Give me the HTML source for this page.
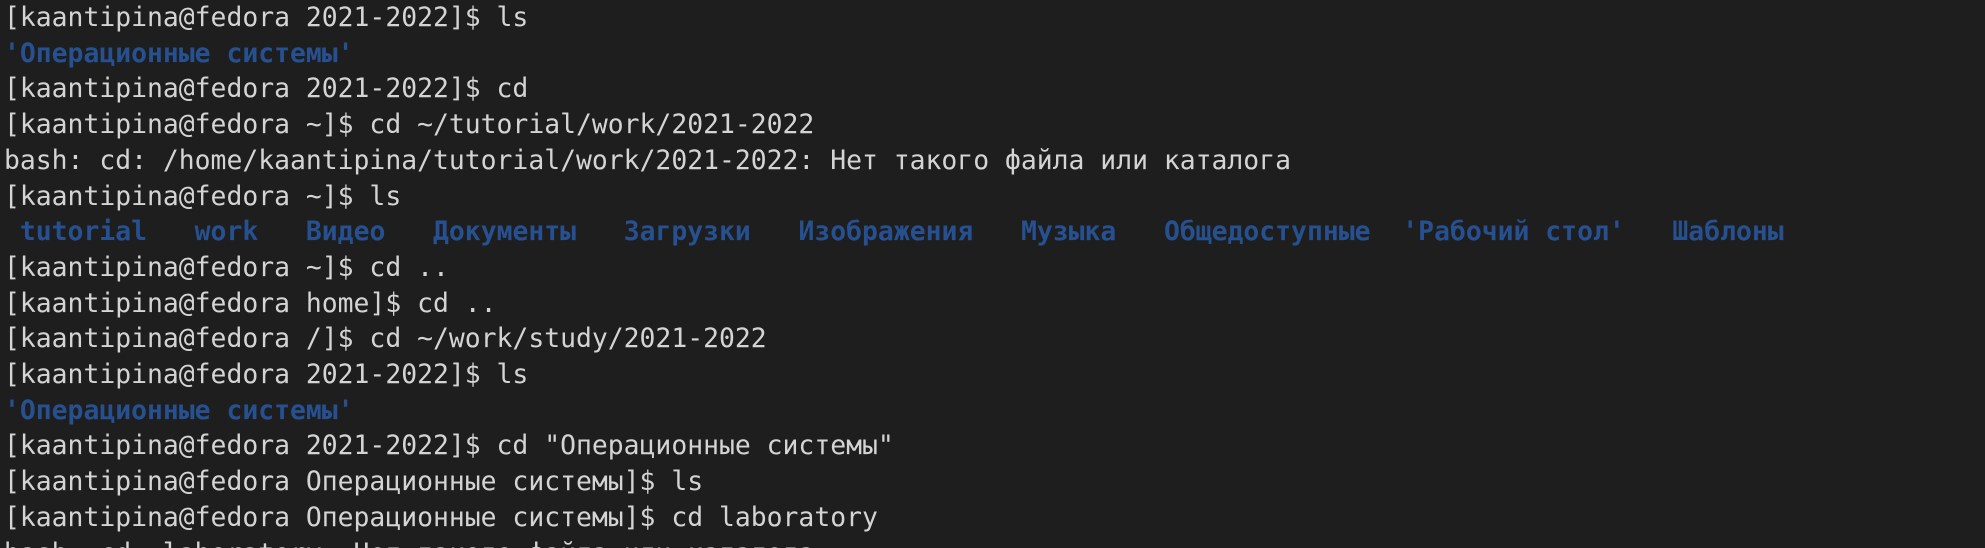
<!DOCTYPE html>
<html><head><meta charset="utf-8"><style>
html,body{margin:0;padding:0;background:#1e1e1e;width:1985px;height:548px;overflow:hidden}
pre{margin:0;padding:0 0 0 4px;font-family:"DejaVu Sans Mono","Liberation Mono",monospace;font-size:26.4px;line-height:35.7px;color:#d4d4d4;position:relative;top:0px;white-space:pre}
b{color:#26508f;font-weight:bold}
</style></head><body><pre>[kaantipina@fedora 2021-2022]$ ls
<b>'Операционные системы'</b>
[kaantipina@fedora 2021-2022]$ cd
[kaantipina@fedora ~]$ cd ~/tutorial/work/2021-2022
bash: cd: /home/kaantipina/tutorial/work/2021-2022: Нет такого файла или каталога
[kaantipina@fedora ~]$ ls
 <b>tutorial</b>   <b>work</b>   <b>Видео</b>   <b>Документы</b>   <b>Загрузки</b>   <b>Изображения</b>   <b>Музыка</b>   <b>Общедоступные</b>  <b>'Рабочий стол'</b>   <b>Шаблоны</b>
[kaantipina@fedora ~]$ cd ..
[kaantipina@fedora home]$ cd ..
[kaantipina@fedora /]$ cd ~/work/study/2021-2022
[kaantipina@fedora 2021-2022]$ ls
<b>'Операционные системы'</b>
[kaantipina@fedora 2021-2022]$ cd "Операционные системы"
[kaantipina@fedora Операционные системы]$ ls
[kaantipina@fedora Операционные системы]$ cd laboratory
bash: cd: laboratory: Нет такого файла или каталога
</pre></body></html>
